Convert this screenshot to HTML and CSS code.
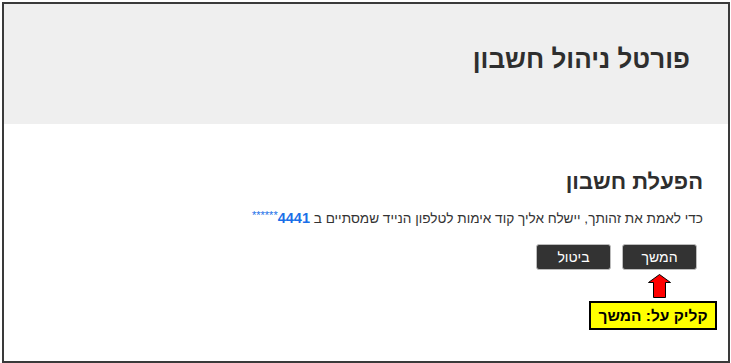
FILE: index.html
```html
<!DOCTYPE html>
<html lang="he" dir="rtl">
<head>
<meta charset="utf-8">
<link rel="stylesheet" href="styles.css">
</head>
<body>
<div class="frame">
  <header class="header">
    <h1 class="title">פורטל ניהול חשבון</h1>
  </header>
  <main class="content">
    <h2 class="subtitle">הפעלת חשבון</h2>
    <p class="message">כדי לאמת את זהותך, יישלח אליך קוד אימות לטלפון הנייד שמסתיים ב <span class="phone"><b>4441</b><span class="stars">******</span></span></p>
    <div class="actions">
      <div class="continue-wrap">
        <button class="btn">המשך</button>
        <svg class="arrow" width="25" height="25" viewBox="0 0 25 25">
          <polygon points="12.5,0.5 23.5,8.5 18.5,8.5 18.5,23.5 6.5,23.5 6.5,8.5 1.5,8.5" fill="#ff0000" stroke="#000" stroke-width="1"/>
        </svg>
      </div>
      <button class="btn">ביטול</button>
    </div>
    <div class="callout-row">
      <div class="callout">קליק על: המשך</div>
    </div>
  </main>
</div>
</body>
</html>
```

FILE: styles.css
```css
html, body {
  margin: 0;
  padding: 0;
  background: #fff;
}
body {
  font-family: "Liberation Sans", Arial, sans-serif;
}
.frame {
  margin: 2px 1px 0 2px;
  width: 724px;
  height: 357px;
  border: 2px solid #3a3a3a;
  display: flex;
  flex-direction: column;
  overflow: hidden;
}
.header {
  background: #efefef;
  height: 120px;
  display: flex;
  align-items: center;
  padding-right: 38px;
}
.title {
  margin: 0;
  font-size: 26px;
  font-weight: bold;
  color: #2e2e2e;
  margin-top: -10px;
}
.content {
  padding: 45px 25px 0 20px;
}
.subtitle {
  margin: 0;
  font-size: 22px;
  font-weight: bold;
  color: #2e2e2e;
  line-height: 26px;
}
.message {
  margin: 11px 0 0;
  font-size: 13.6px;
  color: #333;
  line-height: 18px;
}
.phone {
  color: #1a6fe8;
}
.phone b {
  font-size: 14.5px;
}
.stars {
  font-size: 11px;
  vertical-align: 4px;
}
.actions {
  display: flex;
  gap: 11px;
  margin-top: 16px;
  padding-right: 6px;
}
.continue-wrap {
  position: relative;
}
.btn {
  width: 75px;
  height: 26px;
  background: #333;
  color: #fff;
  border: 1px solid #bdbdbd;
  border-radius: 3px;
  font-family: "Liberation Sans", Arial, sans-serif;
  font-size: 14px;
  font-weight: normal;
  padding: 0;
}
.arrow {
  position: absolute;
  top: 30px;
  left: 25px;
}
.callout-row {
  display: flex;
  margin-top: 31px;
  margin-right: -14px;
}
.callout {
  background: #ffff00;
  border: 2px solid #000;
  width: 128px;
  box-sizing: border-box;
  height: 29px;
  display: flex;
  align-items: center;
  justify-content: center;
  font-weight: bold;
  font-size: 15.5px;
  color: #000;
}
```
